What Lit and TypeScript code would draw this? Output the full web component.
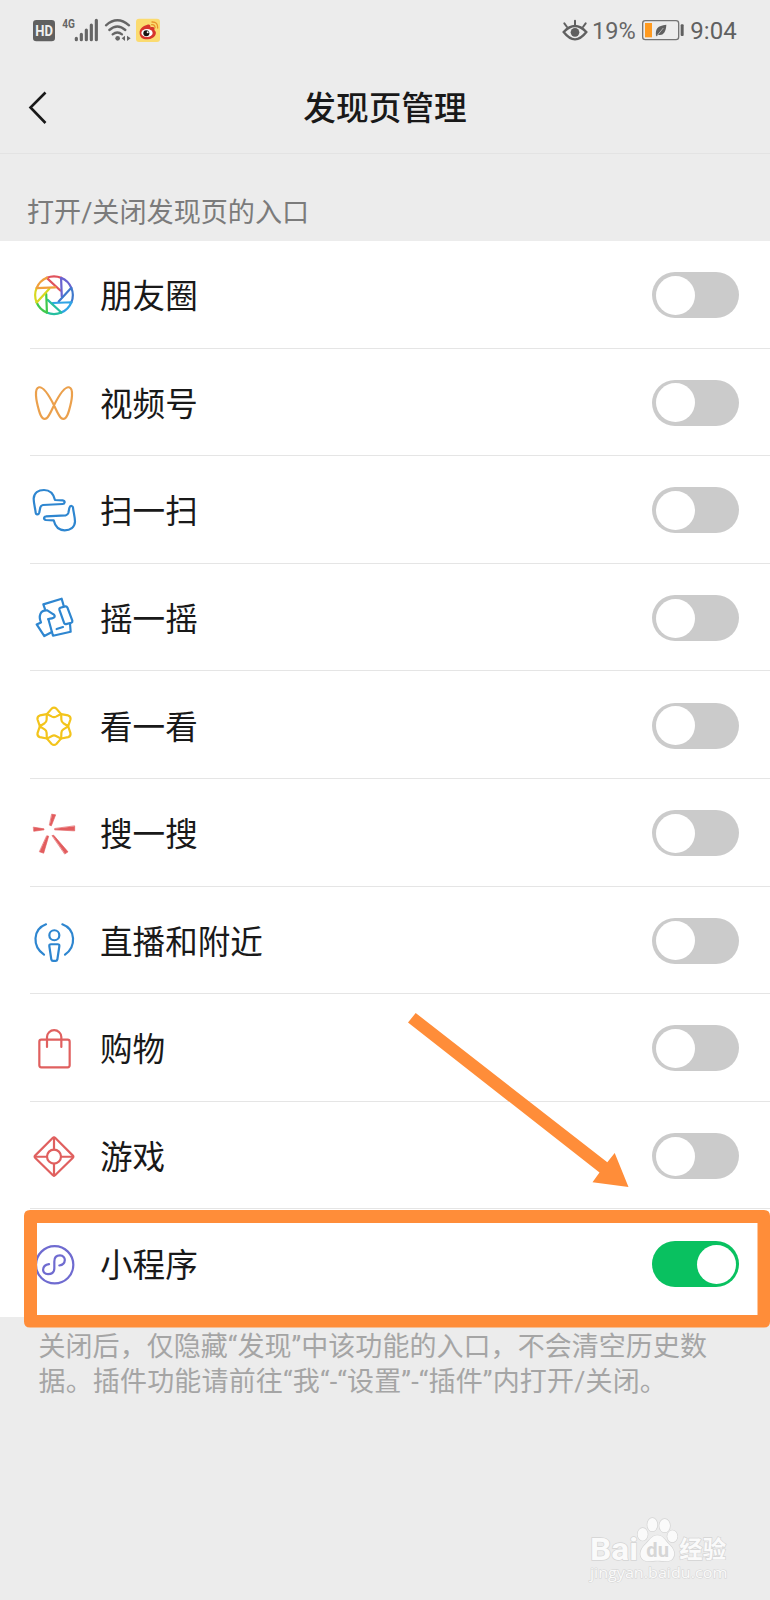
import { LitElement, html, svg, css } from "lit";
import { customElement, property } from "lit/decorators.js";

const BLADES = ["#e0525c", "#6a62d0", "#3f78cc", "#30a4e6", "#27bfa0", "#3fc94c", "#d8d820", "#f0a03c"];

const icons: Record<string, any> = {
  moments: svg`<g transform="translate(102 135)">${BLADES.map(
    (c, i) => svg`<path transform="rotate(${i * 45})" d="M19 -14L-22 -52A56.500 56.500 0 0 1 22 -52" stroke=${c}/>`
  )}</g>`,
  channels: svg`<path stroke="#eba04c" d="M102 464C88 436 70 408 57 410C42 413 48 450 57 480C64 504 72 508 80 503C88 496 95 478 102 464C116 436 134 408 147 410C162 413 156 450 147 480C140 504 132 508 124 503C116 496 109 478 102 464Z"/>`,
  scan: svg`<g stroke="#2e86d0">${[0, 180].map(
    (r) => svg`<path transform="rotate(${r} 103 150.5)" d="M47 158C46 146 41 130 41 116C42 99 55 90 72 90C90 90 101 103 105 120L128 121Q134 122 134 127Q133 132 128 132L69 135Q63 136 61 142L58 157Q56 164 51 163Q47 162 47 158Z"/>`
  )}</g>`,
  shake: svg`<g stroke="#2e86d0"><path d="M75 446L70 432L125 415L131 436"/><path d="M121 442L136 438Q140 437 142 441L157 481Q158 485 154 487L138 491Q134 492 132 487L118 448Q117 444 121 442Z"/><path d="M150 490L152 514L99 526L85 476"/><path d="M85 476Q91 475 96 474Q105 472 104 466Q103 463 99 461L82 450C60 448 55 468 63 486L50 492L73 527L96 515"/><path d="M110 506L129 500"/></g>`,
  look: svg`<g stroke="#f3c41b" transform="translate(102 136.500)">${[0, 1, 2, 3, 4, 5].map(
    (i) => svg`<path transform="rotate(${i * 60})" d="M-21 -37L-7 -53Q0 -59 7 -53L21 -37L6 -29Q0 -26 -6 -29Z"/>`
  )}</g>`,
  search: svg`<g fill="#e25c5e" stroke="#e25c5e" stroke-width="2"><path d="M96 402L107 404L94 437L89 435Z"/><path d="M41 441L72 446V449L42 453Z"/><path d="M164 438V452L104 449V446Z"/><path d="M81 467L86 468L71 519L59 515Z"/><path d="M97 466L101 465L144 515L135 521Z"/></g>`,
  live: svg`<g stroke="#2e86d0"><path d="M78 101C38 116 36 168 72 192M127 101C168 116 169 168 135 192"/><circle cx="103" cy="134" r="15"/><path d="M93 161H113Q119 161 118 167L112 207Q111 211 107 211H99Q95 211 94 207L88 167Q87 161 93 161Z"/></g>`,
  shop: svg`<g stroke="#e0605f"><rect x="58" y="449" width="91" height="83" rx="6"/><path d="M81 471V441A21 20 0 0 1 124 441V471"/></g>`,
  game: svg`<g stroke="#e0605f"><path d="M98 83Q102 79 106 83L158 135Q162 139 158 143L106 194Q102 198 98 194L46 143Q42 139 46 135Z"/><circle cx="102" cy="138.500" r="21"/><path d="M102 82V117M102 160V195M45 139H81M123 139H159"/></g>`,
  mini: svg`<g stroke="#6f6bd0"><circle cx="104" cy="462" r="56"/><path d="M87 460C64 463 64 490 84 490C97 490 103 484 103 472V452C103 440 110 434 120 434C140 434 139 461 118 464"/></g>`,
};

interface Entry { name: string; icon: string; cy: number; on?: boolean }

const ENTRIES: Entry[] = [
  { name: "朋友圈", icon: "moments", cy: 134.4 },
  { name: "视频号", icon: "channels", cy: 457.2 },
  { name: "扫一扫", icon: "scan", cy: 150 },
  { name: "摇一摇", icon: "shake", cy: 472.8 },
  { name: "看一看", icon: "look", cy: 135.6 },
  { name: "搜一搜", icon: "search", cy: 458.4 },
  { name: "直播和附近", icon: "live", cy: 151.2 },
  { name: "购物", icon: "shop", cy: 474 },
  { name: "游戏", icon: "game", cy: 136.8 },
  { name: "小程序", icon: "mini", cy: 459.6, on: true },
];

@customElement("toggle-switch")
export class ToggleSwitch extends LitElement {
  @property({ type: Boolean, reflect: true }) on = false;
  static styles = css`
    :host { display: flex; box-sizing: border-box; width: 87px; height: 46px; padding: 3.5px; border-radius: 23px; background: #cbcbcb; }
    :host([on]) { justify-content: flex-end; background: #09c160; }
    .knob { width: 39px; height: 39px; border-radius: 50%; background: #fff; }
  `;
  render() { return html`<div class="knob"></div>`; }
}

@customElement("entry-row")
export class EntryRow extends LitElement {
  @property({ attribute: false }) entry!: Entry;
  static styles = css`
    :host { display: flex; height: 107.6px; padding-left: 30px; }
    .icon { flex: none; width: 48px; height: 48px; fill: none; stroke-width: 6.6; stroke-linecap: round; stroke-linejoin: round; }
    .body { flex: 1; display: flex; align-items: center; box-sizing: border-box; border-bottom: 1px solid #e5e5e5; padding: 2px 31px 0 0; }
    :host(:last-child) .body { border-bottom: 0; }
    .name { flex: 1; padding: 4px 0 0 22px; font-size: 32.6px; line-height: 48px; color: #191919; }
  `;
  render() {
    const e = this.entry;
    return html`<div class="body">
      <svg class="icon" viewBox="30 ${e.cy - 72} 144 144">${icons[e.icon]}</svg>
      <span class="name">${e.name}</span>
      <toggle-switch ?on=${e.on}></toggle-switch>
    </div>`;
  }
}

@customElement("app-root")
export class AppRoot extends LitElement {
  static styles = css`
    :host { display: flex; flex-direction: column; position: relative; width: 770px; height: 1600px; overflow: hidden; background: #ececec; font-family: Roboto, "Noto Sans CJK SC", sans-serif; }
    .status { display: flex; justify-content: space-between; height: 60px; padding-left: 20px; }
    .status svg, .mark { display: block; font-family: Roboto, sans-serif; }
    .nav { display: grid; grid-template-columns: 1fr auto 1fr; align-items: center; box-sizing: border-box; height: 94px; border-bottom: 1px solid #e3e3e3; }
    .back { width: 60px; height: 60px; }
    .title { padding-top: 5px; font-size: 32.7px; font-weight: 500; line-height: 48px; color: #191919; }
    .caption { box-sizing: border-box; height: 87px; padding: 39px 0 0 27px; font-size: 27.1px; line-height: 40px; color: #7b7b7b; }
    .list { display: flex; flex-direction: column; height: 1076px; background: #fff; }
    .note { padding: 12.5px 0 0 38.5px; font-size: 27px; line-height: 35.5px; letter-spacing: 0.05px; color: #a5a5a5; white-space: nowrap; }
    .line { display: block; }
    .line.wide { letter-spacing: 0.17px; }
    .marks { position: absolute; inset: 0; pointer-events: none; }
    .mark { position: absolute; right: 0; bottom: 0; }
  `;
  render() {
    return html`
      <div class="status">
        <svg width="160" height="60" viewBox="0 0 480 180">
          <rect x="39" y="60" width="66" height="64" rx="10" fill="#606060"/>
          <text x="46" y="108" font-size="43" font-weight="700" fill="#f0f0f0" textLength="53" lengthAdjust="spacingAndGlyphs">HD</text>
          <text x="127" y="85" font-size="38" font-weight="700" fill="#666" textLength="38" lengthAdjust="spacingAndGlyphs">4G</text>
          <path d="M169 115V119M184 103V119M199 90V119M214 75V119M229 61V119" stroke="#666" stroke-width="9.500" stroke-linecap="round"/>
          <g fill="none" stroke="#666" stroke-width="7" stroke-linecap="round"><path d="M258 76Q292 46 327 76M268 90Q292 69 316 90M278 103Q292 92 306 103"/></g>
          <circle cx="293" cy="115" r="7" fill="#666"/>
          <path d="M305 115L315 107V123ZM332 115L321 107V123Z" fill="#666"/>
          <rect x="348" y="56" width="72" height="70" rx="9" fill="#fbdb70"/>
          <path d="M359 101C357 84 372 77 382 74C390 72 393 77 391 82C401 79 406 82 403 90C414 98 405 117 383 118C369 119 360 112 359 101Z" fill="#d7342c"/>
          <ellipse cx="381" cy="99" rx="17" ry="12" fill="#fff"/>
          <circle cx="379" cy="100" r="9" fill="#191512"/><circle cx="383" cy="97" r="3" fill="#fff"/>
          <path d="M396 66Q414 65 413 84M395 74Q405 73 405 83" fill="none" stroke="#e9942c" stroke-width="4" stroke-linecap="round"/>
        </svg>
        <svg width="220" height="60" viewBox="0 0 660 180">
          <path d="M41 96Q75 60 109 96Q75 140 41 96Z" fill="none" stroke="#606060" stroke-width="7"/>
          <circle cx="75" cy="97" r="13" fill="#606060"/>
          <path d="M75 62V74M43 70L51 81M107 70L99 81" stroke="#606060" stroke-width="6" stroke-linecap="round"/>
          <text x="126" y="117" font-size="73" fill="#666" textLength="131" lengthAdjust="spacingAndGlyphs">19%</text>
          <rect x="278" y="62" width="108" height="57" rx="8" fill="none" stroke="#747474" stroke-width="4"/>
          <rect x="285" y="69" width="21" height="43" fill="#ff9a1f"/>
          <path d="M318 108C316 86 322 77 349 74C348 98 338 108 324 104L321 109Z" fill="#606060"/>
          <path d="M321 107L340 84" stroke="#ddd" stroke-width="2"/>
          <rect x="392" y="73" width="9" height="35" rx="3" fill="#606060"/>
          <text x="421" y="117" font-size="73" fill="#606060" textLength="139" lengthAdjust="spacingAndGlyphs">9:04</text>
        </svg>
      </div>
      <div class="nav">
        <svg class="back" viewBox="0 0 60 60"><path d="M45.500 15.500L30.500 30.500L45.500 46" fill="none" stroke="#191919" stroke-width="2.600"/></svg>
        <div class="title">发现页管理</div>
      </div>
      <div class="caption">打开/关闭发现页的入口</div>
      <div class="list">${ENTRIES.map((e) => html`<entry-row .entry=${e}></entry-row>`)}</div>
      <div class="note">
        <span class="line">关闭后，仅隐藏“发现”中该功能的入口，不会清空历史数</span>
        <span class="line wide">据。插件功能请前往“我“-“设置”-“插件”内打开/关闭。</span>
      </div>
      <svg class="marks" width="770" height="1600" viewBox="0 0 770 1600">
        <path fill="#ff8d39" fill-rule="evenodd" d="M30 1210H764Q770 1210 770 1216V1321.500Q770 1327.500 764 1327.500H30Q24 1327.500 24 1321.500V1216Q24 1210 30 1210ZM37 1223V1315H757.500V1223Z"/>
        <path fill="#ff8d39" d="M408 1022.500L415.700 1013L607.300 1162.300L614.700 1153L628.500 1187L592.500 1182.300L599.500 1172.500Z"/>
      </svg>
      <svg class="mark" width="200" height="110" viewBox="0 0 600 330">
        <g fill="#fafafa" stroke="#d4d4d4" stroke-width="4" paint-order="stroke">
          <text x="60" y="210" font-size="93" font-weight="700" textLength="144" lengthAdjust="spacingAndGlyphs">Bai</text>
          <ellipse cx="218" cy="133" rx="15" ry="19"/><ellipse cx="247" cy="104" rx="15" ry="20"/><ellipse cx="284" cy="107" rx="16" ry="20"/><ellipse cx="307" cy="139" rx="15" ry="18"/>
          <path d="M262 136C246 136 240 150 228 161C210 177 207 195 217 207C228 219 246 212 262 212C279 212 296 219 307 207C318 193 312 175 296 162C284 151 280 136 262 136Z"/>
          <text x="328" y="203" font-size="72" font-weight="700" font-family="Noto Sans CJK SC" textLength="140" lengthAdjust="spacingAndGlyphs">经验</text>
          <text x="60" y="263" font-size="42" font-family="Open Sans" stroke-width="3" textLength="412" lengthAdjust="spacingAndGlyphs">jingyan.baidu.com</text>
        </g>
        <text x="229" y="202" font-size="60" font-weight="700" fill="#d6d6d6" textLength="68" lengthAdjust="spacingAndGlyphs">du</text>
      </svg>`;
  }
}
